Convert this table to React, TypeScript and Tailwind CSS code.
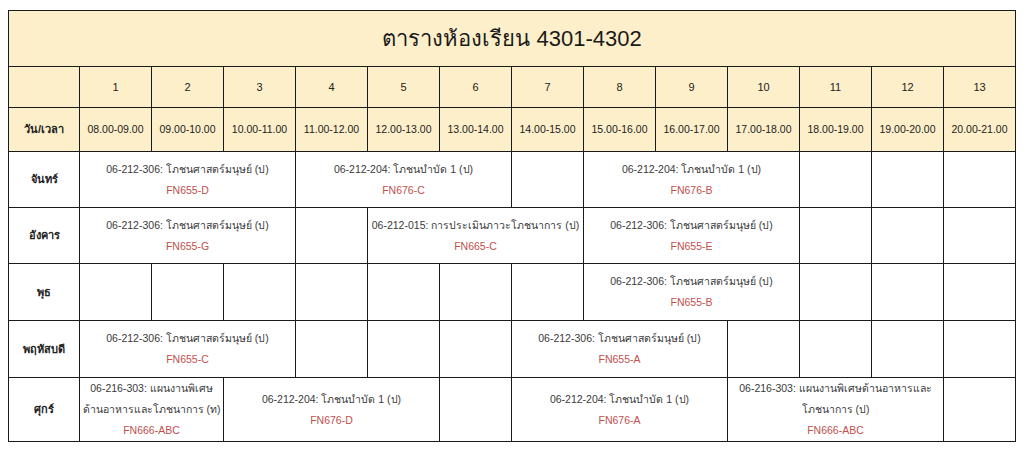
import React from "react";

type Slot = { span: number; code?: string[]; room?: string };

const TIMES = [
  "08.00-09.00",
  "09.00-10.00",
  "10.00-11.00",
  "11.00-12.00",
  "12.00-13.00",
  "13.00-14.00",
  "14.00-15.00",
  "15.00-16.00",
  "16.00-17.00",
  "17.00-18.00",
  "18.00-19.00",
  "19.00-20.00",
  "20.00-21.00",
];

const NUTRI = "06-212-306: โภชนศาสตร์มนุษย์ (ป)";
const THERAPY = "06-212-204: โภชนบำบัด 1 (ป)";

const empty = (n: number): Slot[] => Array.from({ length: n }, () => ({ span: 1 }));

const ROWS: { day: string; h: string; slots: Slot[] }[] = [
  {
    day: "จันทร์",
    h: "h-[56px]",
    slots: [
      { span: 3, code: [NUTRI], room: "FN655-D" },
      { span: 3, code: [THERAPY], room: "FN676-C" },
      ...empty(1),
      { span: 3, code: [THERAPY], room: "FN676-B" },
      ...empty(3),
    ],
  },
  {
    day: "อังคาร",
    h: "h-[56px]",
    slots: [
      { span: 3, code: [NUTRI], room: "FN655-G" },
      ...empty(1),
      { span: 3, code: ["06-212-015: การประเมินภาวะโภชนาการ (ป)"], room: "FN665-C" },
      { span: 3, code: [NUTRI], room: "FN655-E" },
      ...empty(3),
    ],
  },
  {
    day: "พุธ",
    h: "h-[57px]",
    slots: [...empty(7), { span: 3, code: [NUTRI], room: "FN655-B" }, ...empty(3)],
  },
  {
    day: "พฤหัสบดี",
    h: "h-[57px]",
    slots: [
      { span: 3, code: [NUTRI], room: "FN655-C" },
      ...empty(3),
      { span: 3, code: [NUTRI], room: "FN655-A" },
      ...empty(4),
    ],
  },
  {
    day: "ศุกร์",
    h: "h-[64px]",
    slots: [
      { span: 2, code: ["06-216-303: แผนงานพิเศษ", "ด้านอาหารและโภชนาการ (ท)"], room: "FN666-ABC" },
      { span: 3, code: [THERAPY], room: "FN676-D" },
      ...empty(1),
      { span: 3, code: [THERAPY], room: "FN676-A" },
      { span: 3, code: ["06-216-303: แผนงานพิเศษด้านอาหารและ", "โภชนาการ (ป)"], room: "FN666-ABC" },
      ...empty(1),
    ],
  },
];

const cell = "border border-[#1a1a1a] text-center align-middle";

export default function App() {
  return (
    <div className="min-h-[450px] bg-white pl-[8px] pt-[10px] font-['Liberation_Sans','Noto_Sans',sans-serif]">
      <table className="w-[1008px] table-fixed border-collapse border border-[#1a1a1a]">
        <colgroup>
          <col className="w-[71px]" />
          {TIMES.map((t) => (
            <col key={t} className="w-[72px]" />
          ))}
        </colgroup>
        <tbody>
          <tr className="h-[56px] bg-[#fdefca]">
            <td colSpan={14} className={`${cell} text-[22px] text-[#1a1a1a]`}>
              ตารางห้องเรียน 4301-4302
            </td>
          </tr>
          <tr className="h-[41px] bg-[#fdefca] text-[11px] text-[#222]">
            <td className={cell}></td>
            {TIMES.map((_, i) => (
              <td key={i} className={cell}>
                {i + 1}
              </td>
            ))}
          </tr>
          <tr className="h-[44px] bg-[#fdefca] text-[10.5px] text-[#222]">
            <td className={`${cell} font-bold text-[11px]`}>วัน/เวลา</td>
            {TIMES.map((t) => (
              <td key={t} className={cell}>
                {t}
              </td>
            ))}
          </tr>
          {ROWS.map((row) => (
            <tr key={row.day} className={`${row.h} bg-white`}>
              <td className={`${cell} text-[11px] font-bold text-[#222]`}>{row.day}</td>
              {row.slots.map((s, i) => (
                <td key={i} colSpan={s.span} className={`${cell} text-[10.5px] leading-[21px]`}>
                  {s.code && (
                    <div className="text-[#3a3a3a]">
                      {s.code.map((c) => (
                        <div key={c}>{c}</div>
                      ))}
                    </div>
                  )}
                  {s.room && <div className="text-[#c0504d]">{s.room}</div>}
                </td>
              ))}
            </tr>
          ))}
        </tbody>
      </table>
    </div>
  );
}
